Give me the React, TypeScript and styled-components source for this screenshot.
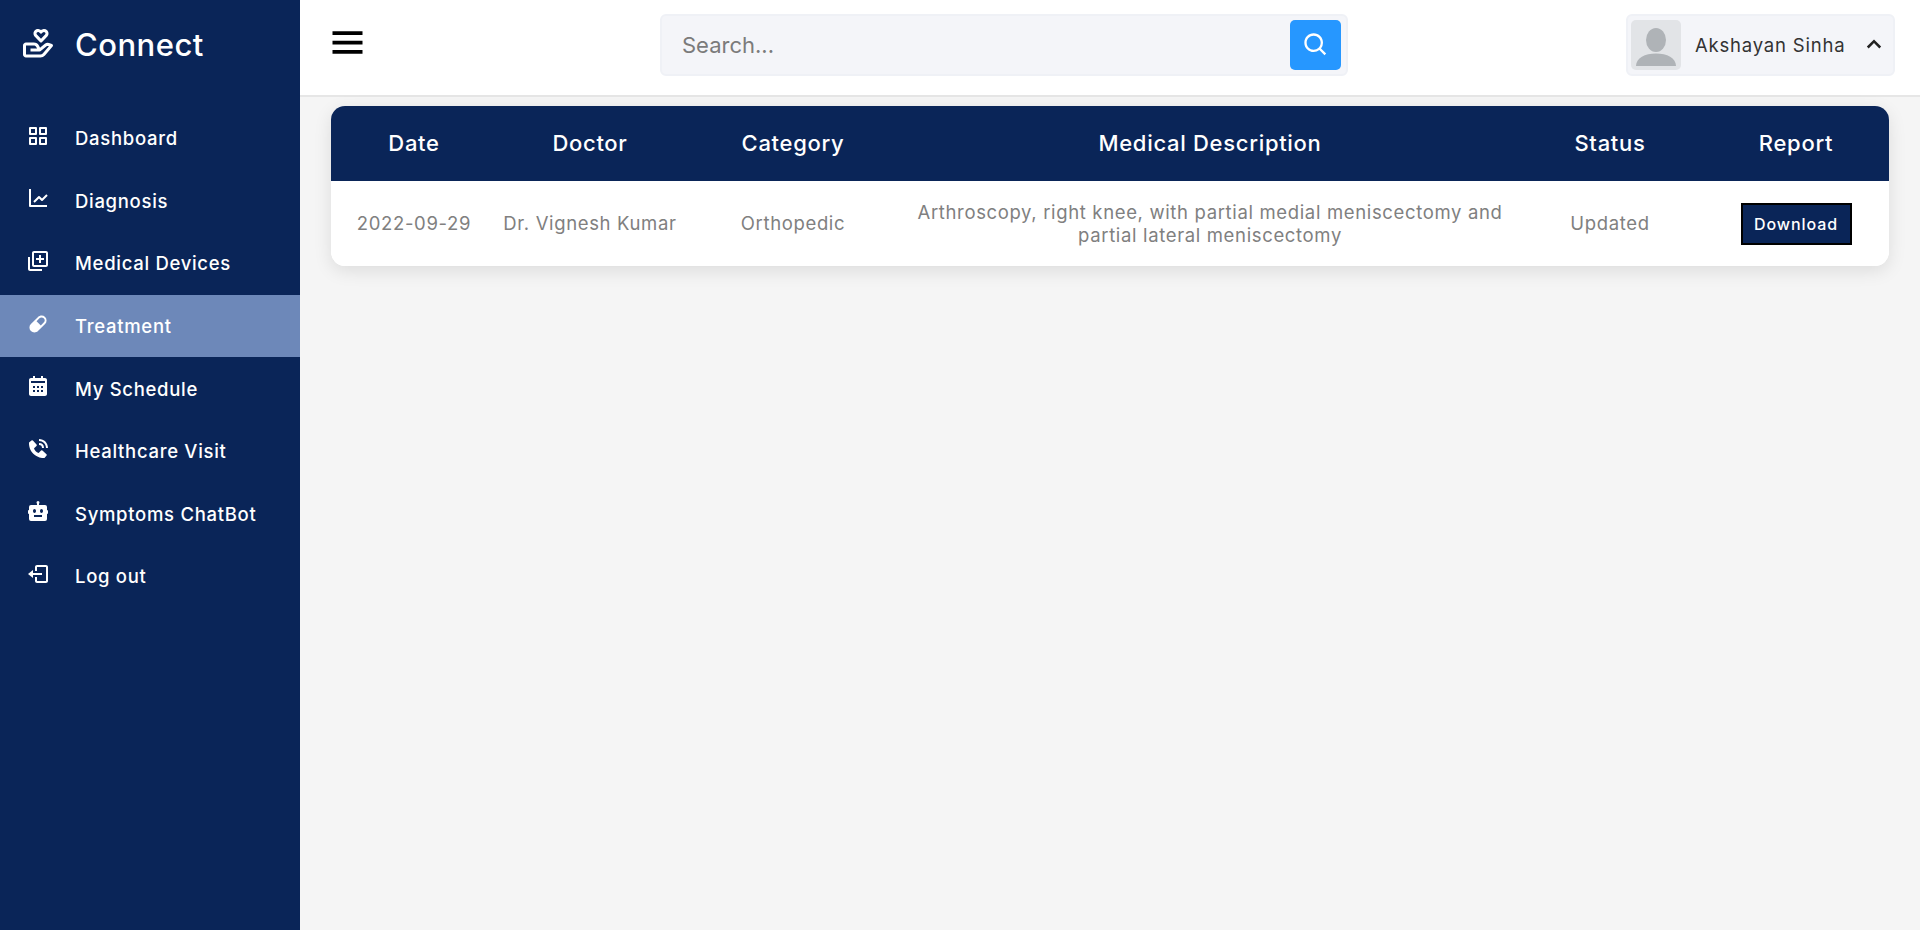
import { type FC } from 'react'
import styled, { createGlobalStyle } from 'styled-components'
import {
  BiAddToQueue,
  BiChevronUp,
  BiDonateHeart,
  BiGridAlt,
  BiLineChart,
  BiLogOut,
  BiMenu,
  BiSearch,
  BiSolidBot,
  BiSolidCalendar,
  BiSolidCapsule,
  BiSolidPhoneCall,
} from 'react-icons/bi'

const navy = '#0a2558'

const GlobalStyle = createGlobalStyle`
  html, body {
    margin: 0;
    padding: 0;
    background: #f5f5f5;
    font-family: Inter, "Open Sans", sans-serif;
  }
  * {
    box-sizing: border-box;
  }
`

const Page = styled.div`
  display: flex;
  width: 100%;
  height: 930px;
  overflow: hidden;
`

const Sidebar = styled.aside`
  flex: 0 0 300px;
  display: flex;
  flex-direction: column;
  background: ${navy};
  color: #fff;
`

const Logo = styled.div`
  display: flex;
  align-items: center;
  height: 88px;
  padding-left: 20px;
  gap: 19px;
  font-size: 31px;
  font-weight: 500;
  letter-spacing: 0.5px;

  svg {
    font-size: 36px;
  }
`

const NavList = styled.nav`
  display: flex;
  flex-direction: column;
  padding-top: 19px;
`

const NavRow = styled.a<{ $active?: boolean }>`
  display: flex;
  align-items: center;
  height: 62.6px;
  padding-left: 26px;
  gap: 25px;
  font-size: 18.5px;
  font-weight: 500;
  letter-spacing: 0.7px;
  color: #fff;
  background: ${p => (p.$active ? '#6d88b9' : 'transparent')};

  svg {
    flex: 0 0 24px;
    font-size: 24px;
    margin-top: -5px;
  }
`

const Main = styled.main`
  flex: 1;
  display: flex;
  flex-direction: column;
  min-width: 0;
`

const TopBar = styled.header`
  display: flex;
  align-items: center;
  justify-content: space-between;
  height: 97px;
  padding: 0 25px 0 30px;
  background: #fff;
  border-bottom: 2px solid #e6e6e6;
`

const MenuButton = styled.button`
  display: flex;
  width: 45px;
  padding: 0;
  margin: -10px 0 0 -5px;
  border: 0;
  background: none;
  color: #000;
  font-size: 45px;
`

const SearchBox = styled.form`
  display: flex;
  align-items: center;
  width: 688px;
  height: 62px;
  margin: -6px 0 0 12px;
  padding: 0 5px 0 18px;
  background: #f4f5f9;
  border: 2px solid #eff1f6;
  border-radius: 6px;
`

const SearchInput = styled.input`
  flex: 1;
  min-width: 0;
  border: 0;
  outline: 0;
  background: none;
  font: 400 22px Inter, sans-serif;
  color: #333;

  &::placeholder {
    color: #7b7b7b;
    opacity: 1;
  }
`

const SearchButton = styled.button`
  display: flex;
  align-items: center;
  justify-content: center;
  width: 51px;
  height: 50px;
  padding: 0;
  border: 0;
  border-radius: 5px;
  background: #2697ff;
  color: #fff;
  font-size: 28px;
`

const Profile = styled.div`
  display: flex;
  align-items: center;
  width: 269px;
  height: 62px;
  margin-top: -6px;
  padding: 0 4px 0 3px;
  background: #f4f5f9;
  border: 2px solid #eff1f6;
  border-radius: 6px;
  color: #333;

  > svg:last-child {
    margin-left: auto;
    font-size: 30px;
    color: #222;
  }
`

const Avatar = styled.div`
  display: flex;
  width: 50px;
  height: 50px;
  border-radius: 5px;
  overflow: hidden;
  background: #e2e4e7;
`

const ProfileName = styled.span`
  margin-left: 14px;
  font-size: 18.5px;
  font-weight: 400;
  letter-spacing: 0.8px;
  white-space: nowrap;
`

const Content = styled.section`
  padding: 9px 31px 0 31px;
`

const TableCard = styled.div`
  width: 1558px;
  border-radius: 14px;
  background: #fff;
  overflow: hidden;
  box-shadow: 0 5px 18px rgba(0, 0, 0, 0.1);
`

const TableRow = styled.div<{ $head?: boolean }>`
  display: grid;
  grid-template-columns: 166px 186px 220px 614px 186px 186px;
  align-items: center;
  height: ${p => (p.$head ? '75px' : '85px')};
  background: ${p => (p.$head ? navy : '#fff')};
  color: ${p => (p.$head ? '#fff' : '#808080')};
  font-size: ${p => (p.$head ? '22px' : '18.5px')};
  font-weight: ${p => (p.$head ? 500 : 400)};
  letter-spacing: ${p => (p.$head ? '0.7px' : '0.65px')};
  text-align: center;
`

const Cell = styled.div`
  line-height: 23px;
  white-space: pre-line;
`

const DownloadButton = styled.button`
  width: 111px;
  height: 42px;
  padding: 0;
  border: 2px solid #000;
  background: ${navy};
  color: #fff;
  font: 500 16px Inter, sans-serif;
  letter-spacing: 0.9px;
`

const navItems = [
  { label: 'Dashboard', Icon: BiGridAlt },
  { label: 'Diagnosis', Icon: BiLineChart },
  { label: 'Medical Devices', Icon: BiAddToQueue },
  { label: 'Treatment', Icon: BiSolidCapsule, active: true },
  { label: 'My Schedule', Icon: BiSolidCalendar },
  { label: 'Healthcare Visit', Icon: BiSolidPhoneCall },
  { label: 'Symptoms ChatBot', Icon: BiSolidBot },
  { label: 'Log out', Icon: BiLogOut },
]

const columns = ['Date', 'Doctor', 'Category', 'Medical Description', 'Status', 'Report']

const AvatarIcon: FC = () => (
  <svg width="50" height="50" viewBox="0 0 50 50">
    <ellipse cx="25" cy="20" rx="10" ry="12" fill="#afb3b7" />
    <path d="M5 46c0-8 9-12.500 20-12.500S45 38 45 46z" fill="#afb3b7" />
  </svg>
)

const App: FC = () => (
  <Page>
    <GlobalStyle />
    <Sidebar>
      <Logo>
        <BiDonateHeart />
        Connect
      </Logo>
      <NavList>
        {navItems.map(({ label, Icon, active }) => (
          <NavRow key={label} $active={active}>
            <Icon />
            {label}
          </NavRow>
        ))}
      </NavList>
    </Sidebar>
    <Main>
      <TopBar>
        <MenuButton type="button" aria-label="Menu">
          <BiMenu />
        </MenuButton>
        <SearchBox>
          <SearchInput placeholder="Search..." />
          <SearchButton type="button" aria-label="Search">
            <BiSearch />
          </SearchButton>
        </SearchBox>
        <Profile>
          <Avatar>
            <AvatarIcon />
          </Avatar>
          <ProfileName>Akshayan Sinha</ProfileName>
          <BiChevronUp />
        </Profile>
      </TopBar>
      <Content>
        <TableCard>
          <TableRow $head>
            {columns.map(column => (
              <Cell key={column}>{column}</Cell>
            ))}
          </TableRow>
          <TableRow>
            <Cell>2022-09-29</Cell>
            <Cell>Dr. Vignesh Kumar</Cell>
            <Cell>Orthopedic</Cell>
            <Cell>
              {'Arthroscopy, right knee, with partial medial meniscectomy and\npartial lateral meniscectomy'}
            </Cell>
            <Cell>Updated</Cell>
            <Cell>
              <DownloadButton type="button">Download</DownloadButton>
            </Cell>
          </TableRow>
        </TableCard>
      </Content>
    </Main>
  </Page>
)

export default App
